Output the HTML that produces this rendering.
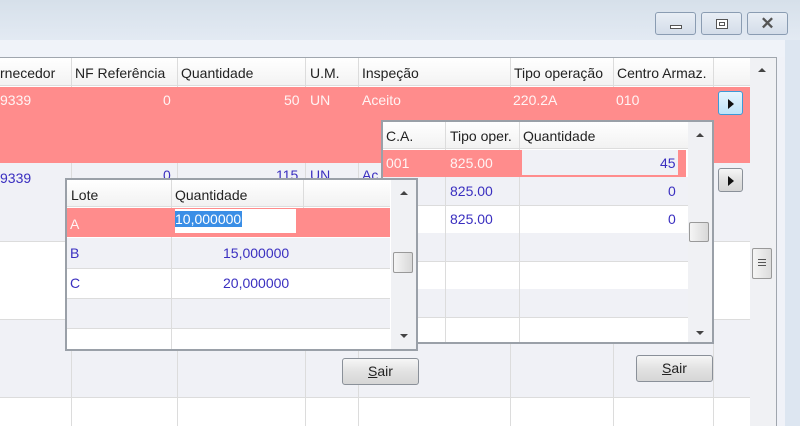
<!DOCTYPE html><html><head><style>
*{margin:0;padding:0;box-sizing:border-box}
body{width:800px;height:426px;overflow:hidden;position:relative;background:#f0f2f8;font-family:"Liberation Sans",sans-serif;font-size:14px;color:#222}
.a{position:absolute}
.t{position:absolute;white-space:nowrap}
.w{color:#fff4f4}.b{color:#3a2fc0}
.btn{position:absolute;border:1px solid #8a9099;border-radius:3px;background:linear-gradient(#f6f6f6,#e2e2e2 50%,#d6d6d6);text-align:center;line-height:24px}
.wb{position:absolute;top:12px;height:23px;border:1px solid #8a9cb2;border-radius:3px;background:linear-gradient(#e9eef5,#d4dde9)}
.vl{position:absolute;width:1px;background:#dcdcdc}
.hl{position:absolute;height:1px;background:#dcdcdc}
</style></head><body>
<div class="a" style="left:0;top:0;width:800px;height:40px;background:linear-gradient(#d6e0ea,#e3eaf3)"></div>
<div class="a" style="left:0;top:40px;width:785px;height:17px;background:#f0f3f9"></div>
<div class="a" style="left:785px;top:40px;width:15px;height:386px;background:#dde6f1"></div>
<div class="wb" style="left:655px;width:41px"><div class="a" style="left:14px;top:12px;width:12px;height:4px;border:1px solid #555;background:#fff"></div></div>
<div class="wb" style="left:701px;width:41px"><div class="a" style="left:14px;top:6px;width:12px;height:10px;border:1px solid #555;background:#fff"><div class="a" style="left:2px;top:2px;width:6px;height:4px;border:1px solid #555"></div></div></div>
<div class="wb" style="left:747px;width:41px;text-align:center;line-height:21px;font-size:17px;color:#555;font-weight:bold">✕</div>
<div class="a" style="left:0;top:57px;width:777px;height:369px;border-top:1px solid #a0a6ae;border-right:1px solid #a0a6ae;background:#fff"></div>
<div class="a" style="left:0;top:58px;width:750px;height:28px;background:linear-gradient(#fff,#f3f3f3);border-bottom:1px solid #ddd"></div>
<div class="a" style="left:0;top:163px;width:750px;height:78px;background:#f0f1f6"></div>
<div class="a" style="left:0;top:319px;width:750px;height:78px;background:#f0f1f6"></div>
<div class="hl" style="left:0;top:241px;width:750px"></div><div class="hl" style="left:0;top:319px;width:750px"></div><div class="hl" style="left:0;top:397px;width:750px"></div>
<div class="vl" style="left:71px;top:58px;height:368px"></div><div class="vl" style="left:177px;top:58px;height:368px"></div><div class="vl" style="left:305px;top:58px;height:368px"></div><div class="vl" style="left:358px;top:58px;height:368px"></div><div class="vl" style="left:510px;top:58px;height:368px"></div><div class="vl" style="left:613px;top:58px;height:368px"></div><div class="vl" style="left:713px;top:58px;height:368px"></div>
<div class="t" style="left:0;top:65px">rnecedor</div><div class="t" style="left:75px;top:65px">NF Referência</div><div class="t" style="left:181px;top:65px">Quantidade</div><div class="t" style="left:310px;top:65px">U.M.</div><div class="t" style="left:362px;top:65px">Inspeção</div><div class="t" style="left:514px;top:65px">Tipo operação</div><div class="t" style="left:617px;top:65px">Centro Armaz.</div>
<div class="a" style="left:0;top:87px;width:750px;height:76px;background:#ff8c8c"></div>
<div class="t w" style="left:0;top:92px">9339</div><div class="t w" style="left:163px;top:92px">0</div><div class="t w" style="left:284px;top:92px">50</div><div class="t w" style="left:310px;top:92px">UN</div><div class="t w" style="left:362px;top:92px">Aceito</div><div class="t w" style="left:513px;top:92px">220.2A</div><div class="t w" style="left:616px;top:92px">010</div>
<div class="t b" style="left:0;top:170px">9339</div><div class="t b" style="left:163px;top:167px">0</div><div class="t b" style="left:276px;top:167px">115</div><div class="t b" style="left:310px;top:167px">UN</div><div class="t b" style="left:362px;top:167px">Ac</div>
<div class="btn" style="left:718px;top:91px;width:25px;height:24px;border-color:#3c9ad8;background:linear-gradient(#e6f5fd,#bfe3f8)"><div class="a" style="left:9px;top:7px;border-left:6px solid #111;border-top:5px solid transparent;border-bottom:5px solid transparent"></div></div>
<div class="btn" style="left:718px;top:168px;width:25px;height:24px"><div class="a" style="left:9px;top:7px;border-left:6px solid #111;border-top:5px solid transparent;border-bottom:5px solid transparent"></div></div>
<div class="a" style="left:750px;top:58px;width:26px;height:368px;background:#f0f1f4"></div>
<div class="a" style="left:758px;top:68px;border-bottom:4px solid #444;border-left:4px solid transparent;border-right:4px solid transparent"></div>
<div class="a" style="left:752px;top:248px;width:20px;height:31px;border:1px solid #999;border-radius:2px;background:linear-gradient(90deg,#f5f5f5,#dcdcdc)"><div class="a" style="left:5px;top:10px;width:8px;height:7px;border-top:1px solid #555;border-bottom:1px solid #555"></div><div class="a" style="left:5px;top:13px;width:8px;height:1px;background:#555"></div></div>
<div class="a" style="left:381px;top:120px;width:333px;height:224px;border:2px solid #9aa0a8;background:#fff"></div>
<div class="a" style="left:383px;top:122px;width:305px;height:27px;background:linear-gradient(#fff,#f2f2f2);border-bottom:1px solid #ddd"></div>
<div class="a" style="left:383px;top:177px;width:305px;height:28px;background:#f0f1f6"></div>
<div class="a" style="left:383px;top:233px;width:305px;height:28px;background:#f0f1f6"></div>
<div class="a" style="left:383px;top:289px;width:305px;height:28px;background:#f0f1f6"></div>
<div class="hl" style="left:383px;top:205px;width:305px"></div><div class="hl" style="left:383px;top:261px;width:305px"></div><div class="hl" style="left:383px;top:317px;width:305px"></div>
<div class="vl" style="left:445px;top:122px;height:220px"></div><div class="vl" style="left:519px;top:122px;height:220px"></div>
<div class="t" style="left:386px;top:128px">C.A.</div><div class="t" style="left:450px;top:128px">Tipo oper.</div><div class="t" style="left:523px;top:128px">Quantidade</div>
<div class="a" style="left:383px;top:150px;width:303px;height:27px;background:#ff8c8c"></div>
<div class="a" style="left:522px;top:150px;width:156px;height:25px;background:#f0f1f6"></div>
<div class="t w" style="left:386px;top:155px">001</div><div class="t w" style="left:450px;top:155px">825.00</div><div class="t b" style="left:660px;top:155px">45</div>
<div class="t b" style="left:450px;top:183px">825.00</div><div class="t b" style="left:668px;top:183px">0</div>
<div class="t b" style="left:450px;top:211px">825.00</div><div class="t b" style="left:668px;top:211px">0</div>
<div class="a" style="left:688px;top:122px;width:24px;height:220px;background:#f0f1f4"></div>
<div class="a" style="left:696px;top:133px;border-bottom:4px solid #444;border-left:4px solid transparent;border-right:4px solid transparent"></div>
<div class="a" style="left:696px;top:331px;border-top:4px solid #444;border-left:4px solid transparent;border-right:4px solid transparent"></div>
<div class="a" style="left:689px;top:222px;width:20px;height:20px;border:1px solid #999;border-radius:2px;background:linear-gradient(90deg,#f5f5f5,#d8d8d8)"></div>
<div class="btn" style="left:636px;top:355px;width:77px;height:27px"><u>S</u>air</div>
<div class="a" style="left:65px;top:178px;width:353px;height:173px;border:2px solid #9aa0a8;background:#fff"></div>
<div class="a" style="left:67px;top:180px;width:323px;height:27px;background:linear-gradient(#fff,#f2f2f2);border-bottom:1px solid #ddd"></div>
<div class="a" style="left:67px;top:238px;width:323px;height:30px;background:#f0f1f6"></div>
<div class="a" style="left:67px;top:298px;width:323px;height:30px;background:#f0f1f6"></div>
<div class="hl" style="left:67px;top:268px;width:323px"></div><div class="hl" style="left:67px;top:298px;width:323px"></div><div class="hl" style="left:67px;top:328px;width:323px"></div>
<div class="vl" style="left:171px;top:180px;height:169px"></div><div class="vl" style="left:303px;top:180px;height:28px"></div>
<div class="t" style="left:71px;top:187px">Lote</div><div class="t" style="left:175px;top:187px">Quantidade</div>
<div class="a" style="left:67px;top:208px;width:323px;height:29px;background:#ff8c8c"></div>
<div class="a" style="left:175px;top:209px;width:121px;height:24px;background:#fff"></div>
<div class="t" style="left:175px;top:211px;background:#3a8ee6;color:#fff;line-height:16px;padding-right:1px">10,000000</div>
<div class="t w" style="left:70px;top:216px">A</div>
<div class="t b" style="left:70px;top:245px">B</div><div class="t b" style="left:223px;top:245px">15,000000</div>
<div class="t b" style="left:70px;top:275px">C</div><div class="t b" style="left:223px;top:275px">20,000000</div>
<div class="a" style="left:391px;top:180px;width:25px;height:169px;background:#f0f1f4"></div>
<div class="a" style="left:400px;top:191px;border-bottom:4px solid #444;border-left:4px solid transparent;border-right:4px solid transparent"></div>
<div class="a" style="left:400px;top:334px;border-top:4px solid #444;border-left:4px solid transparent;border-right:4px solid transparent"></div>
<div class="a" style="left:393px;top:252px;width:20px;height:21px;border:1px solid #999;border-radius:2px;background:linear-gradient(90deg,#f5f5f5,#d8d8d8)"></div>
<div class="btn" style="left:342px;top:358px;width:77px;height:27px"><u>S</u>air</div>
</body></html>
